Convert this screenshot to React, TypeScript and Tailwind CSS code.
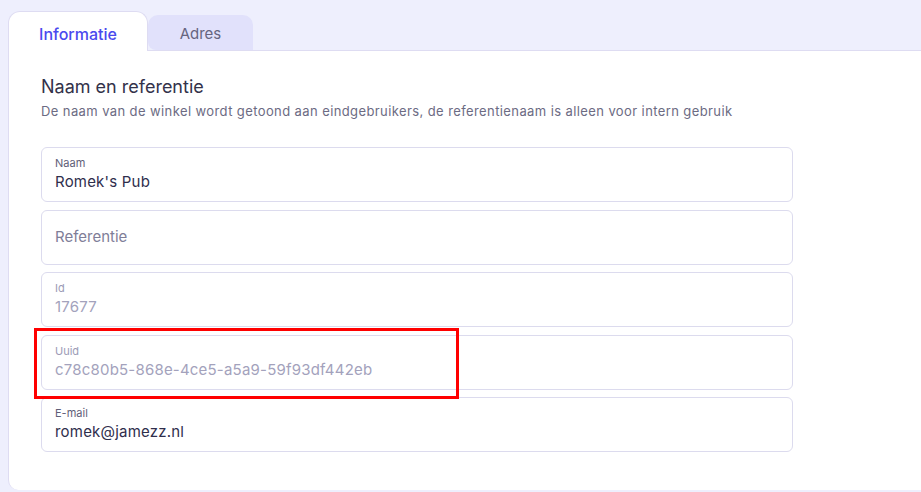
import React from 'react';

const font = { fontFamily: 'Inter, "Noto Sans", sans-serif' };

type FieldProps = {
  label?: string;
  value?: string;
  placeholder?: string;
  disabled?: boolean;
};

const Field: React.FC<FieldProps> = ({ label, value, placeholder, disabled }) => {
  if (placeholder) {
    return (
      <div className="h-[55px] rounded-md border border-[#dcdbee] bg-white px-[13px] flex items-center">
        <span className="text-[15px] text-[#7f7e98]">{placeholder}</span>
      </div>
    );
  }
  return (
    <div className="h-[55px] rounded-md border border-[#dcdbee] bg-white px-[13px] pt-[7px] flex flex-col">
      <span className={`text-[11px] leading-[16px] ${disabled ? 'text-[#9c9bb6]' : 'text-[#5f5e78]'}`}>{label}</span>
      <span className={`text-[15px] leading-[22px] tracking-[0.2px] ${disabled ? 'text-[#a3a2bc]' : 'text-[#2f2e4c]'}`}>{value}</span>
    </div>
  );
};

export default function App() {
  return (
    <div className="w-[921px] h-[492px] bg-[#eeeffd] overflow-hidden flex flex-col pl-[8px]" style={font}>
      {/* tabs */}
      <div className="flex items-end pt-[12px] h-[51px] border-b border-[#dedcf2]">
        <div className="relative z-10 -mb-px h-[40px] w-[140px] rounded-t-[12px] border border-b-0 border-[#dedcf2] bg-white flex items-center justify-center pt-[5px]">
          <span className="text-[16px] font-medium text-[#4a49ee]">Informatie</span>
        </div>
        <div className="h-[35px] w-[105px] rounded-t-[10px] rounded-bl-[8px] bg-[#e1e1fb] flex items-center justify-center pt-[4px]">
          <span className="text-[15px] text-[#66657f]">Adres</span>
        </div>
      </div>

      {/* panel */}
      <div className="relative flex-1 bg-white border-l border-[#dedcf2] rounded-bl-[10px] mb-[2px] pl-[32px] pt-[23px]">
        <div className="text-[18px] text-[#33324a] leading-[25px]">Naam en referentie</div>
        <div className="text-[13px] tracking-[0.4px] text-[#6c6b83] leading-[18px] mt-[3px]">
          De naam van de winkel wordt getoond aan eindgebruikers, de referentienaam is alleen voor intern gebruik
        </div>

        <div className="w-[752px] mt-[27px] flex flex-col gap-[7.5px]">
          <Field label="Naam" value="Romek's Pub" />
          <Field placeholder="Referentie" />
          <Field label="Id" value="17677" disabled />
          <Field label="Uuid" value="c78c80b5-868e-4ce5-a5a9-59f93df442eb" disabled />
          <Field label="E-mail" value="romek@jamezz.nl" />
        </div>

        {/* annotation highlight */}
        <div className="absolute left-[25px] top-[277px] w-[425px] h-[71px] border-[3px] border-[#ff0000] pointer-events-none" />
      </div>
    </div>
  );
}
